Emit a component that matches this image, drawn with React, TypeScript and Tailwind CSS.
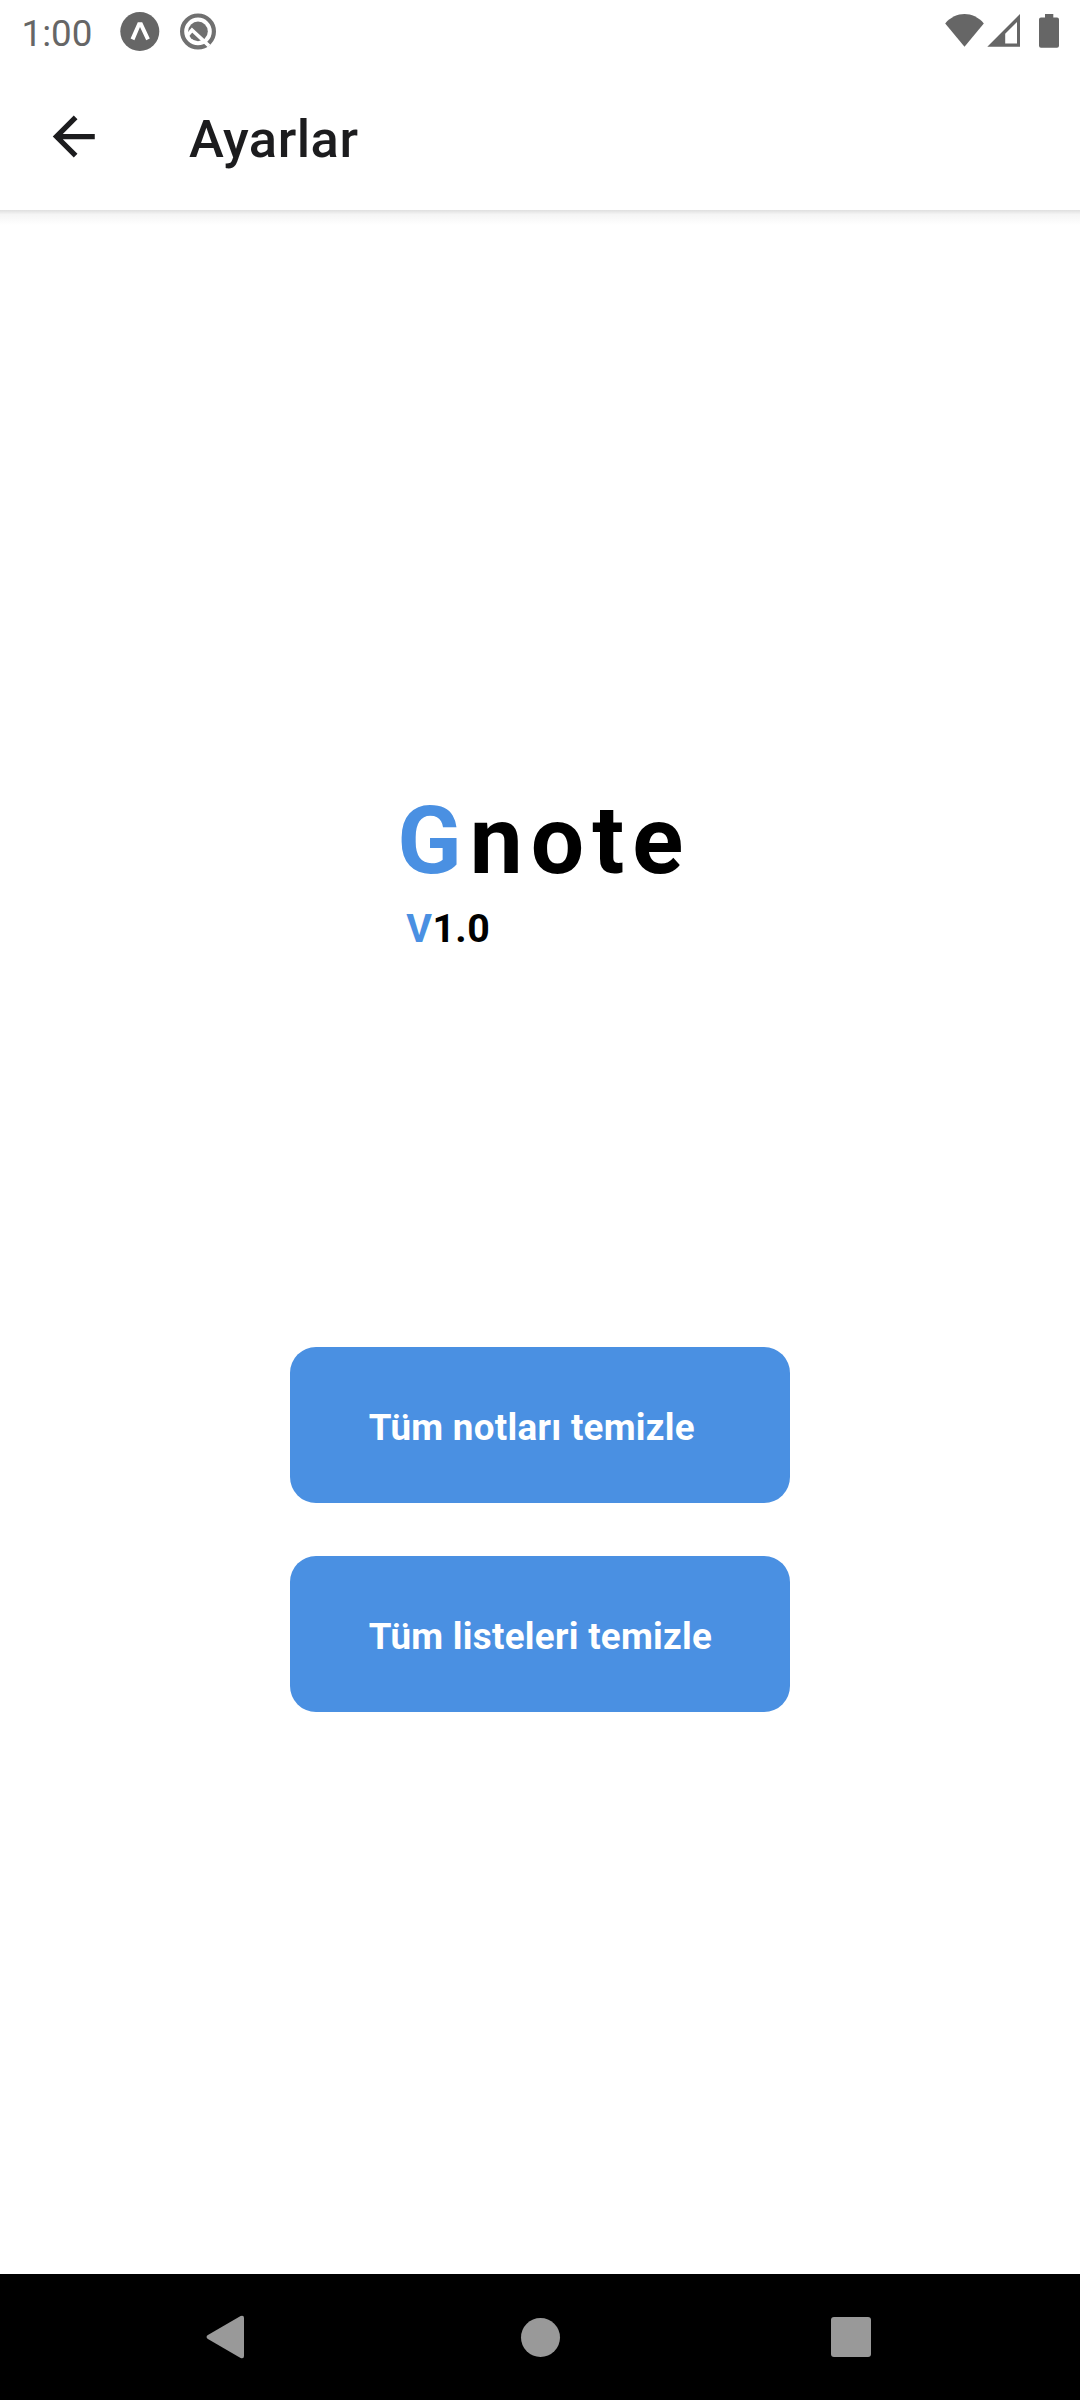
import React from "react";

function ExpoIcon() {
  return (
    <svg className="h-[40px] w-[40px]" viewBox="0 0 40 40">
      <circle cx="19.8" cy="19.5" r="19.5" fill="#666" />
      <path
        d="M10.6 26.6 L17.8 10.2 H22.2 L29.8 26.4 L26.2 28.2 L20 15 L14.4 28.2 Z"
        fill="#fff"
      />
    </svg>
  );
}

function QuickIcon() {
  return (
    <svg className="h-[40px] w-[40px]" viewBox="0 0.6 40 40">
      <circle cx="20" cy="20" r="15.9" fill="none" stroke="#707070" strokeWidth="4.2" />
      <circle cx="20" cy="20" r="9.8" fill="#707070" />
      <path
        d="M9.5 24 L14 18.6 L31 34.5"
        fill="none"
        stroke="#fff"
        strokeWidth="3.6"
        strokeLinejoin="miter"
      />
    </svg>
  );
}

function StatusBar() {
  return (
    <div className="flex h-[63px] items-start justify-between pl-[21.5px] pr-[19px] text-[#666]">
      <div className="flex items-start">
        <span className="w-[98.5px] pt-[12px] text-[36.75px] leading-[43px]">1:00</span>
        <div className="flex gap-[18px] pt-[12px]">
          <ExpoIcon />
          <QuickIcon />
        </div>
      </div>
      <svg className="mt-[12px] h-[38px] w-[118px]" viewBox="943 12 118 38" fill="#666">
        <path d="M945.2 23.4 C956 11 973 11 983.8 23.4 L964.5 46.8 Z" />
        <path
          fillRule="evenodd"
          d="M987.3 46.7 L1020 14 V46.7 Z M1005.2 33.8 V43.5 H1017 V22 Z"
        />
        <path d="M1045 14 H1053.3 V17.6 H1057 Q1059 17.6 1059 19.6 V45.7 Q1059 47.8 1057 47.8 H1041 Q1039 47.8 1039 45.7 V19.6 Q1039 17.6 1041 17.6 H1045 Z" />
      </svg>
    </div>
  );
}

function Header() {
  return (
    <header className="flex h-[147px] items-start">
      <svg className="ml-[42px] mt-[42px] h-[63px] w-[63px]" viewBox="-0.1 0 24 24" fill="#1c1c1e">
        <path d="M20 11H7.83l5.59-5.59L12 4l-8 8 8 8 1.41-1.41L7.83 13H20v-2z" />
      </svg>
      <h1 className="ml-[84px] mt-[45px] text-[52.5px] font-medium leading-[62px] tracking-[0.5px] text-[#1c1c1e]">
        Ayarlar
      </h1>
    </header>
  );
}

function ActionButton({ label }: { label: string }) {
  return (
    <button className="flex h-[156px] w-[500px] items-center rounded-[26px] bg-[#4a90e2] pl-[78.75px] pt-[5px] text-left text-[36.75px] font-bold leading-[44px] tracking-[0.28px] text-white">
      {label}
    </button>
  );
}

function NavigationBar() {
  return (
    <nav className="grid h-[126px] grid-cols-[450px_180px_450px] items-center bg-black">
      <svg className="ml-[206px] h-[44px] w-[38px]" viewBox="0 0 38 44" fill="#999">
        <path d="M1.5 20.3 L34.6 1 Q38 -0.2 38 3 V41 Q38 44.2 34.6 43 L1.5 23.7 Q-0.4 22 1.5 20.3 Z" />
      </svg>
      <div className="h-[39px] w-[39px] justify-self-center rounded-full bg-[#999]" />
      <div className="ml-[201px] h-[40px] w-[40px] rounded-[3px] bg-[#999]" />
    </nav>
  );
}

export default function App() {
  return (
    <div className="flex h-[2400px] w-[1080px] flex-col bg-white font-[Roboto,sans-serif]">
      <StatusBar />
      <Header />
      <main className="flex flex-1 flex-col items-center">
        <div className="h-[15px] w-full bg-linear-to-b from-[#dfdfdf] via-[#f5f5f5] via-30% to-white" />
        <section className="mt-[560px] flex w-[285.5px] flex-col">
          <h2 className="whitespace-nowrap text-[94.5px] font-bold leading-[112px] tracking-[8.1px] text-black">
            <span className="text-[#4a90e2]">G</span>note
          </h2>
          <p className="ml-[9px] mt-[9px] text-[39.375px] font-bold leading-[46px] tracking-[0.4px] text-black">
            <span className="text-[#4a90e2]">V</span>1.0
          </p>
        </section>
        <div className="mt-[395px] flex flex-col gap-[53px]">
          <ActionButton label="Tüm notları temizle" />
          <ActionButton label="Tüm listeleri temizle" />
        </div>
      </main>
      <NavigationBar />
    </div>
  );
}
